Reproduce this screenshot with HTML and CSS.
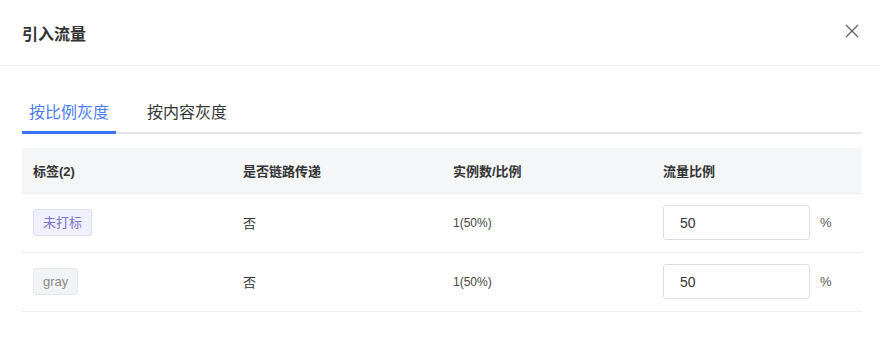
FILE: index.html
```html
<!DOCTYPE html>
<html lang="zh">
<head>
<meta charset="utf-8">
<title>引入流量</title>
<link rel="stylesheet" href="styles.css">
</head>
<body>
<div class="dialog">
  <div class="dialog-header">
    <div class="dialog-title">引入流量</div>
    <button class="close" aria-label="关闭">
      <svg width="14" height="14" viewBox="0 0 14 14"><path d="M1 1L13 13M13 1L1 13" stroke="#666" stroke-width="1.4" fill="none"/></svg>
    </button>
  </div>
  <div class="dialog-body">
    <div class="tabs">
      <div class="tab active">按比例灰度</div>
      <div class="tab">按内容灰度</div>
    </div>
    <table class="grid">
      <thead>
        <tr><th>标签(2)</th><th>是否链路传递</th><th>实例数/比例</th><th>流量比例</th></tr>
      </thead>
      <tbody>
        <tr>
          <td><span class="tag tag-purple">未打标</span></td>
          <td>否</td>
          <td class="num">1(50%)</td>
          <td><div class="ratio"><input class="input" value="50"><span class="pct">%</span></div></td>
        </tr>
        <tr>
          <td><span class="tag tag-gray">gray</span></td>
          <td>否</td>
          <td class="num">1(50%)</td>
          <td><div class="ratio"><input class="input" value="50"><span class="pct">%</span></div></td>
        </tr>
      </tbody>
    </table>
  </div>
</div>
</body>
</html>
```
FILE: styles.css
```css
* { box-sizing: border-box; }
html, body { margin: 0; padding: 0; background: #fff; }
body {
  font-family: "Liberation Sans", "Noto Sans CJK SC", sans-serif;
  color: #333;
  width: 880px;
  height: 340px;
  overflow: hidden;
}
.dialog-header {
  height: 66px;
  border-bottom: 1px solid #ececec;
  display: flex;
  align-items: center;
  justify-content: space-between;
  padding: 0 20px 0 22px;
}
.dialog-title {
  font-size: 16px;
  font-weight: 600;
  color: #333;
  margin-top: 0;
}
.close {
  border: 0;
  background: none;
  padding: 0;
  width: 16px;
  height: 16px;
  display: flex;
  align-items: center;
  justify-content: center;
  margin-top: -4px;
}
.dialog-body {
  padding: 28px 18px 0 22px;
}
.tabs {
  display: flex;
  gap: 24px;
  border-bottom: 2px solid #e4e6ea;
}
.tab {
  height: 40px;
  line-height: 37px;
  padding: 0 7px;
  font-size: 16px;
  color: #333;
  border-bottom: 3px solid transparent;
  margin-bottom: -2px;
}
.tab.active {
  color: #4a7cf6;
  border-bottom-color: #3b72f5;
}
.grid {
  margin-top: 14px;
  width: 840px;
  table-layout: fixed;
  border-collapse: collapse;
}
.grid th {
  height: 45px;
  background: #f5f6f8;
  text-align: left;
  font-size: 13px;
  font-weight: 600;
  color: #333;
  padding: 0 11px;
  border-bottom: 1px solid #ebedf0;
}
.grid td {
  height: 59px;
  padding: 0 11px;
  font-size: 13px;
  color: #333;
  border-bottom: 1px solid #ebedf0;
}
.grid td.num {
  font-size: 12px;
  color: #444;
}
.tag {
  display: inline-block;
  height: 27px;
  line-height: 25px;
  padding: 0 9px;
  border-radius: 3px;
  font-size: 13px;
}
.tag-purple {
  background: #efeffd;
  border: 1px solid #dedcf8;
  color: #7e72c6;
}
.tag-gray {
  background: #f2f3f5;
  border: 1px solid #e6e7ea;
  color: #888;
}
.ratio {
  display: flex;
  align-items: center;
  gap: 10px;
}
.input {
  width: 147px;
  height: 35px;
  border: 1px solid #dcdfe6;
  border-radius: 3px;
  padding: 0 16px;
  font-family: inherit;
  font-size: 14px;
  color: #333;
  outline: none;
}
.pct {
  font-size: 13px;
  color: #555;
}
```
